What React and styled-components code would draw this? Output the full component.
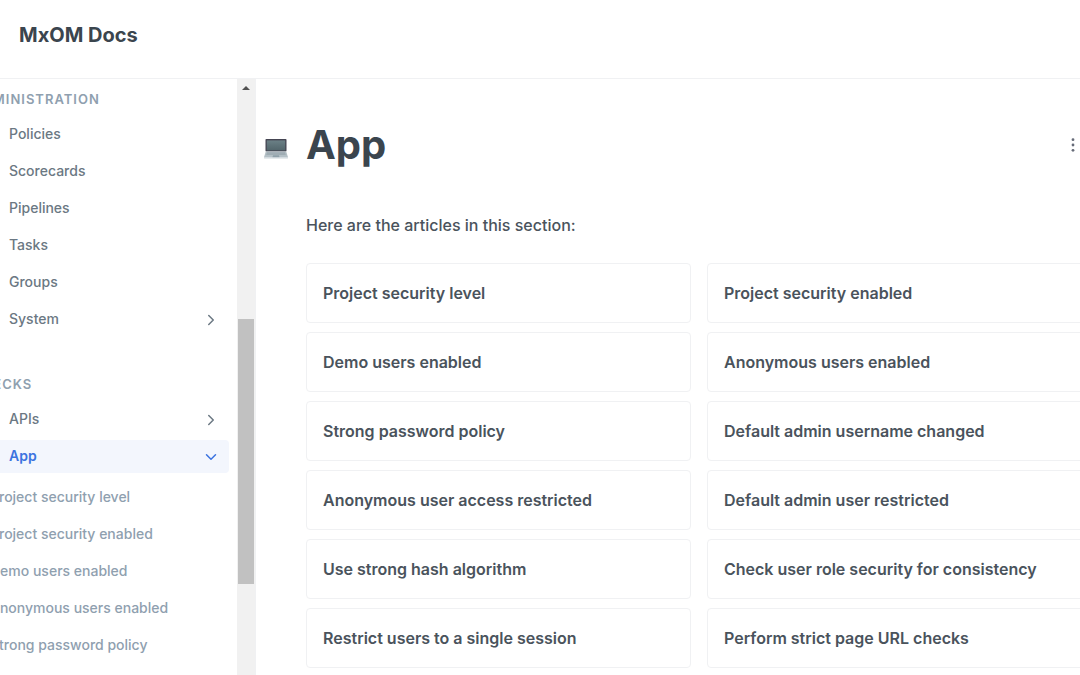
import React from 'react';
import styled, { createGlobalStyle } from 'styled-components';
import { FiChevronRight, FiChevronDown } from 'react-icons/fi';

const colors = {
    heading: '#3b454e',
    text: '#4a535c',
    menu: '#6b7883',
    muted: '#8fa0af',
    border: '#f0f1f3',
    blue: '#3b73e0',
    lightBlue: '#f3f6fd',
};

const administration = [
    { name: 'Policies' },
    { name: 'Scorecards' },
    { name: 'Pipelines' },
    { name: 'Tasks' },
    { name: 'Groups' },
    { name: 'System', expandable: true },
];

const appChecks = [
    'Project security level',
    'Project security enabled',
    'Demo users enabled',
    'Anonymous users enabled',
    'Strong password policy',
];

const articles = [
    'Project security level',
    'Project security enabled',
    'Demo users enabled',
    'Anonymous users enabled',
    'Strong password policy',
    'Default admin username changed',
    'Anonymous user access restricted',
    'Default admin user restricted',
    'Use strong hash algorithm',
    'Check user role security for consistency',
    'Restrict users to a single session',
    'Perform strict page URL checks',
];

function MenuItem({ name, expandable, open }) {
    return (
        <li>
            <MenuLink href="#" $active={open}>
                <span>{name}</span>
                {expandable && (open ? <FiChevronDown size={18} /> : <FiChevronRight size={18} />)}
            </MenuLink>
        </li>
    );
}

function LaptopIcon() {
    return (
        <svg width="24" height="24" viewBox="0 -1 24 24" aria-hidden="true">
            <defs>
                <linearGradient id="screen" x1="0" y1="0" x2="0" y2="1">
                    <stop offset="0" stopColor="#6b8086" />
                    <stop offset="1" stopColor="#52656b" />
                </linearGradient>
            </defs>
            <rect x="1.5" y="1" width="21" height="12.5" rx="0.8" fill="#454552" />
            <rect x="2.8" y="2.4" width="18.4" height="10" fill="url(#screen)" />
            <path d="M1.8 13.5h20.4L24 19.2H0z" fill="#b4c0c6" />
            <path d="M3 14.3h18l.8 2.6H2.2z" fill="#a0adb4" />
            <path d="M9 17.2h6l.6 2.2H8.4z" fill="#8fa0a9" />
            <path d="M0 19.2h24v.8q0 .6-.8.6H.8q-.8 0-.8-.6z" fill="#ccd5da" />
        </svg>
    );
}

function App() {
    return (
        <Page>
            <GlobalStyle />
            <Header>
                <Brand href="#">MxOM Docs</Brand>
            </Header>
            <Body>
                <Sidebar>
                    <Nav aria-label="Docs">
                        <SectionTitle>Administration</SectionTitle>
                        <Menu>
                            {administration.map((item) => (
                                <MenuItem key={item.name} {...item} />
                            ))}
                        </Menu>
                        <SectionTitle>Checks</SectionTitle>
                        <Menu>
                            <MenuItem name="APIs" expandable />
                            <MenuItem name="App" expandable open />
                        </Menu>
                        <SubMenu>
                            {appChecks.map((name) => (
                                <li key={name}>
                                    <SubLink href="#">{name}</SubLink>
                                </li>
                            ))}
                        </SubMenu>
                    </Nav>
                    <ScrollTrack>
                        <ScrollBefore>
                            <ScrollArrow />
                        </ScrollBefore>
                        <ScrollThumb />
                        <ScrollAfter />
                    </ScrollTrack>
                </Sidebar>
                <Main>
                    <TitleRow>
                        <LaptopIcon />
                        <h1>App</h1>
                        <MoreButton type="button" aria-label="More">
                            <svg width="4" height="16" viewBox="0 0 4 16" fill="#666b78">
                                <circle cx="2" cy="2.7" r="1.4" />
                                <circle cx="2" cy="8" r="1.4" />
                                <circle cx="2" cy="13.3" r="1.4" />
                            </svg>
                        </MoreButton>
                    </TitleRow>
                    <Content>
                        <p>Here are the articles in this section:</p>
                        <CardGrid>
                            {articles.map((title) => (
                                <Card key={title} href="#">{title}</Card>
                            ))}
                        </CardGrid>
                    </Content>
                </Main>
            </Body>
        </Page>
    );
}

const GlobalStyle = createGlobalStyle`
    * {
        box-sizing: border-box;
    }

    body {
        margin: 0;
        background: white;
        color: ${colors.text};
        font-family: Inter, "Liberation Sans", sans-serif;
        font-size: 16px;
    }

    a {
        color: inherit;
        text-decoration: none;
    }
`

const Page = styled.div`
    display: flex;
    flex-direction: column;
    height: 100vh;
    overflow: hidden;
`

const Header = styled.header`
    padding: 20px 19px 28px;
    border-bottom: 1px solid ${colors.border};
`

const Brand = styled.a`
    display: block;
    color: ${colors.heading};
    font-size: 20px;
    font-weight: 700;
    line-height: 30px;
`

const Body = styled.div`
    display: flex;
    flex: 1;
    min-height: 0;
`

const Sidebar = styled.aside`
    display: flex;
    flex: none;
    width: 256px;
    overflow: hidden;
    border-right: 1px solid ${colors.border};
`

/* the menu is scrolled sideways, its left edge is out of view */
const Nav = styled.nav`
    flex: 1;
    margin-left: -28px;
    padding: 11px 8px 0 0;
`

const SectionTitle = styled.h2`
    margin: 0;
    color: ${colors.muted};
    font-size: 13px;
    font-weight: 600;
    letter-spacing: 1px;
    line-height: 18px;
    text-transform: uppercase;
`

const Menu = styled.ul`
    display: flex;
    flex-direction: column;
    gap: 4px;
    margin: 0;
    padding: 10px 0 0;
    list-style: none;

    & + ${SectionTitle} {
        margin-top: 39px;
    }
`

const MenuLink = styled.a`
    display: flex;
    align-items: center;
    justify-content: space-between;
    height: 33px;
    padding: 0 9px 0 37px;
    border-radius: 4px;
    background: ${props => props.$active ? colors.lightBlue : 'transparent'};
    font-size: 14px;
    font-weight: ${props => props.$active ? 600 : 500};

    && {
        color: ${props => props.$active ? colors.blue : colors.menu};
    }

    & span {
        padding-bottom: 3px;
    }
`

const SubMenu = styled(Menu)`
    padding: 7px 0 0 18px;
`

const SubLink = styled.a`
    display: block;
    font-size: 14px;
    font-weight: 500;
    line-height: 33px;

    && {
        color: ${colors.muted};
    }
`

const ScrollTrack = styled.div`
    display: flex;
    flex: none;
    flex-direction: column;
    width: 18px;
    padding: 0 1px;
    background: #f1f1f1;
`

const ScrollBefore = styled.div`
    flex: 240;
`

const ScrollArrow = styled.div`
    width: 8px;
    margin: 7px auto 0;
    border: 4px solid transparent;
    border-top: 0;
    border-bottom-color: #505050;
`

const ScrollThumb = styled.div`
    flex: 265;
    background: #c1c1c1;
`

const ScrollAfter = styled.div`
    flex: 91;
`

const Main = styled.main`
    flex: 1;
    min-width: 0;
    padding: 36px 0 0 8px;
    overflow: hidden;
`

const TitleRow = styled.div`
    display: flex;
    align-items: center;
    gap: 18px;

    & > svg {
        margin-top: 8px;
    }

    & h1 {
        margin: 0;
        color: ${colors.heading};
        font-size: 40px;
        font-weight: 700;
        line-height: 60px;
    }
`

const MoreButton = styled.button`
    display: flex;
    margin-left: auto;
    padding: 5px;
    border: 0;
    background: none;
`

const Content = styled.div`
    padding: 38px 0 0 42px;

    & p {
        margin: 0 0 26px;
        font-weight: 500;
        line-height: 24px;
    }
`

/* second column runs past the right edge of the window */
const CardGrid = styled.div`
    display: grid;
    grid-template-columns: 1fr 1fr;
    gap: 9px 16px;
    margin-right: -12px;
`

const Card = styled.a`
    padding: 18px 17px 18px 16px;
    border: 1px solid ${colors.border};
    border-radius: 4px;
    font-weight: 600;
    line-height: 22px;
`

export default App
